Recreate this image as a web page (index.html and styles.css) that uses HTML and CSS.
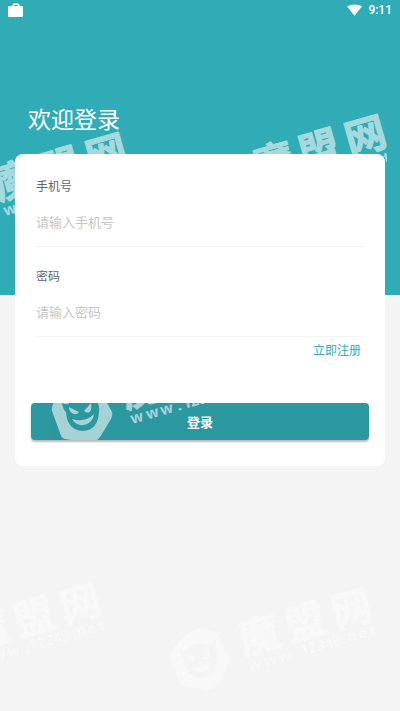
FILE: index.html
```html
<!DOCTYPE html>
<html lang="zh-CN">
<head>
<meta charset="utf-8">
<meta name="viewport" content="width=device-width, initial-scale=1">
<title>欢迎登录</title>
<link rel="stylesheet" href="styles.css">
</head>
<body>
<svg width="0" height="0" class="defs" aria-hidden="true">
  <defs>
    <g id="face">
      <path fill-rule="evenodd" d="M-17-21L-8-28Q-4-31 1-30L12-28Q17-27 19-22L22-15L30 0Q31 3 29 7L18 25Q13 31 7 31L-17 27Q-21 26-22 21L-30-1Q-31-7-26-12ZM-20-9Q-19-2-16 0Q-15 18 1 19Q16 18 17 0Q18-6 15-10Q17-14 15-20Q13-14 8-13Q-3-18-12-10Q-14-6-20-9Z"/>
      <path d="M-13-5L-3 0Q-6 4-10 1Q-13-1-13-5ZM9-9Q10-3 8 0Q5 2 2-1ZM-10 7Q3 11 12 2Q11 11 2 13Q-6 14-10 7Z"/>
    </g>
    <g id="mark">
      <use href="#face"/>
      <g transform="translate(50 12) rotate(-16)">
        <text class="mark-name" x="-2 46 94" y="-17">魔盟网</text>
        <text class="mark-url" x="0 16 31 48 54 62 71 79 87 97 103 114 126" y="0">www.12349.net</text>
      </g>
    </g>
  </defs>
</svg>
<div class="screen">
  <svg class="watermark" aria-hidden="true">
    <use href="#mark" x="-45" y="204"/>
    <svg width="387" height="300"><use href="#mark" x="214" y="186"/></svg>
    <use href="#mark" x="-71" y="654"/>
    <use href="#mark" x="200" y="659"/>
  </svg>
  <header class="status">
    <svg class="bag" viewBox="0 0 16 14" aria-hidden="true"><path d="M2 3H4.500V2Q4.500 0.500 6 0.500H10Q11.500 0.500 11.500 2V3H14Q15 3 15 4V13Q15 14 14 14H1Q0 14 0 13V4Q0 3 1 3ZM6 3H10V2H6Z" fill-rule="evenodd"/></svg>
    <div class="status-right">
      <svg class="wifi" viewBox="0 0 16 12" aria-hidden="true"><path d="M0 2Q8-2 16 2L8 12Z"/></svg>
      <time>9:11</time>
    </div>
  </header>
  <main>
    <h1>欢迎登录</h1>
    <form class="card">
      <div class="field">
        <label for="phone">手机号</label>
        <input id="phone" type="tel" placeholder="请输入手机号">
      </div>
      <div class="field">
        <label for="password">密码</label>
        <input id="password" type="password" placeholder="请输入密码">
      </div>
      <a class="register" href="#register">立即注册</a>
      <button class="login" type="button">
        <svg class="watermark" aria-hidden="true"><use href="#mark" x="51" y="9"/></svg>
        <span>登录</span>
      </button>
    </form>
  </main>
</div>
</body>
</html>
```

FILE: styles.css
```css
* {
  box-sizing: border-box;
}

body {
  margin: 0;
  background: #f4f4f4;
  font-family: "Noto Sans CJK SC", sans-serif;
}

.defs {
  position: absolute;
}

.screen {
  position: relative;
  min-height: 100vh;
  overflow: hidden;
  background: linear-gradient(#30acb7 295px, #f4f4f4 295px);
}

.watermark {
  position: absolute;
  inset: 0;
  width: 100%;
  height: 100%;
  fill: #fbfbfb;
  opacity: 0.58;
  pointer-events: none;
}

.mark-name {
  font: bold 41px "Noto Sans CJK SC", sans-serif;
  stroke: #fbfbfb;
  stroke-width: 1px;
  stroke-linejoin: round;
}

.mark-url {
  font: bold 15px "Noto Sans", sans-serif;
}

.status {
  position: relative;
  display: flex;
  align-items: center;
  justify-content: space-between;
  height: 20px;
  padding: 0 8px;
  color: #fff;
}

.status svg {
  fill: #fff;
}

.bag {
  width: 16px;
  height: 14px;
}

.status-right {
  display: flex;
  align-items: center;
  gap: 6px;
}

.wifi {
  width: 15px;
  height: 12px;
}

time {
  font: 500 12px/20px Roboto, sans-serif;
}

main {
  position: relative;
  padding: 79px 15px 0;
}

h1 {
  margin: 0 0 17px 13px;
  color: #fff;
  font-size: 23px;
  font-weight: 400;
  line-height: 38px;
}

.card {
  display: flex;
  flex-direction: column;
  padding: 21px 16px 26px;
  border-radius: 8px;
  background: #fff;
}

.field {
  display: flex;
  flex-direction: column;
  gap: 2px;
  margin: 0 5px 18px;
}

label {
  color: #666;
  font-size: 12px;
  line-height: 22px;
}

input {
  width: 100%;
  height: 48px;
  padding: 0 0 2px;
  border: 0;
  border-bottom: 1px solid #f3f3f3;
  outline: 0;
  background: transparent;
  color: #444;
  font: 13px "Noto Sans CJK SC", sans-serif;
}

input::placeholder {
  color: #c6c6c6;
  opacity: 1;
}

.register {
  align-self: flex-end;
  margin: -16px 8px 42px 0;
  color: #30acb7;
  font-size: 12px;
  line-height: 22px;
  text-decoration: none;
}

.login {
  position: relative;
  height: 37px;
  padding: 0;
  overflow: hidden;
  border: 0;
  border-radius: 4px;
  background: #2c98a1;
  box-shadow: 0 2px 2px #bbb;
  color: #fff;
  font: bold 13px "Noto Sans CJK SC", sans-serif;
}

.login span {
  position: relative;
}
```
